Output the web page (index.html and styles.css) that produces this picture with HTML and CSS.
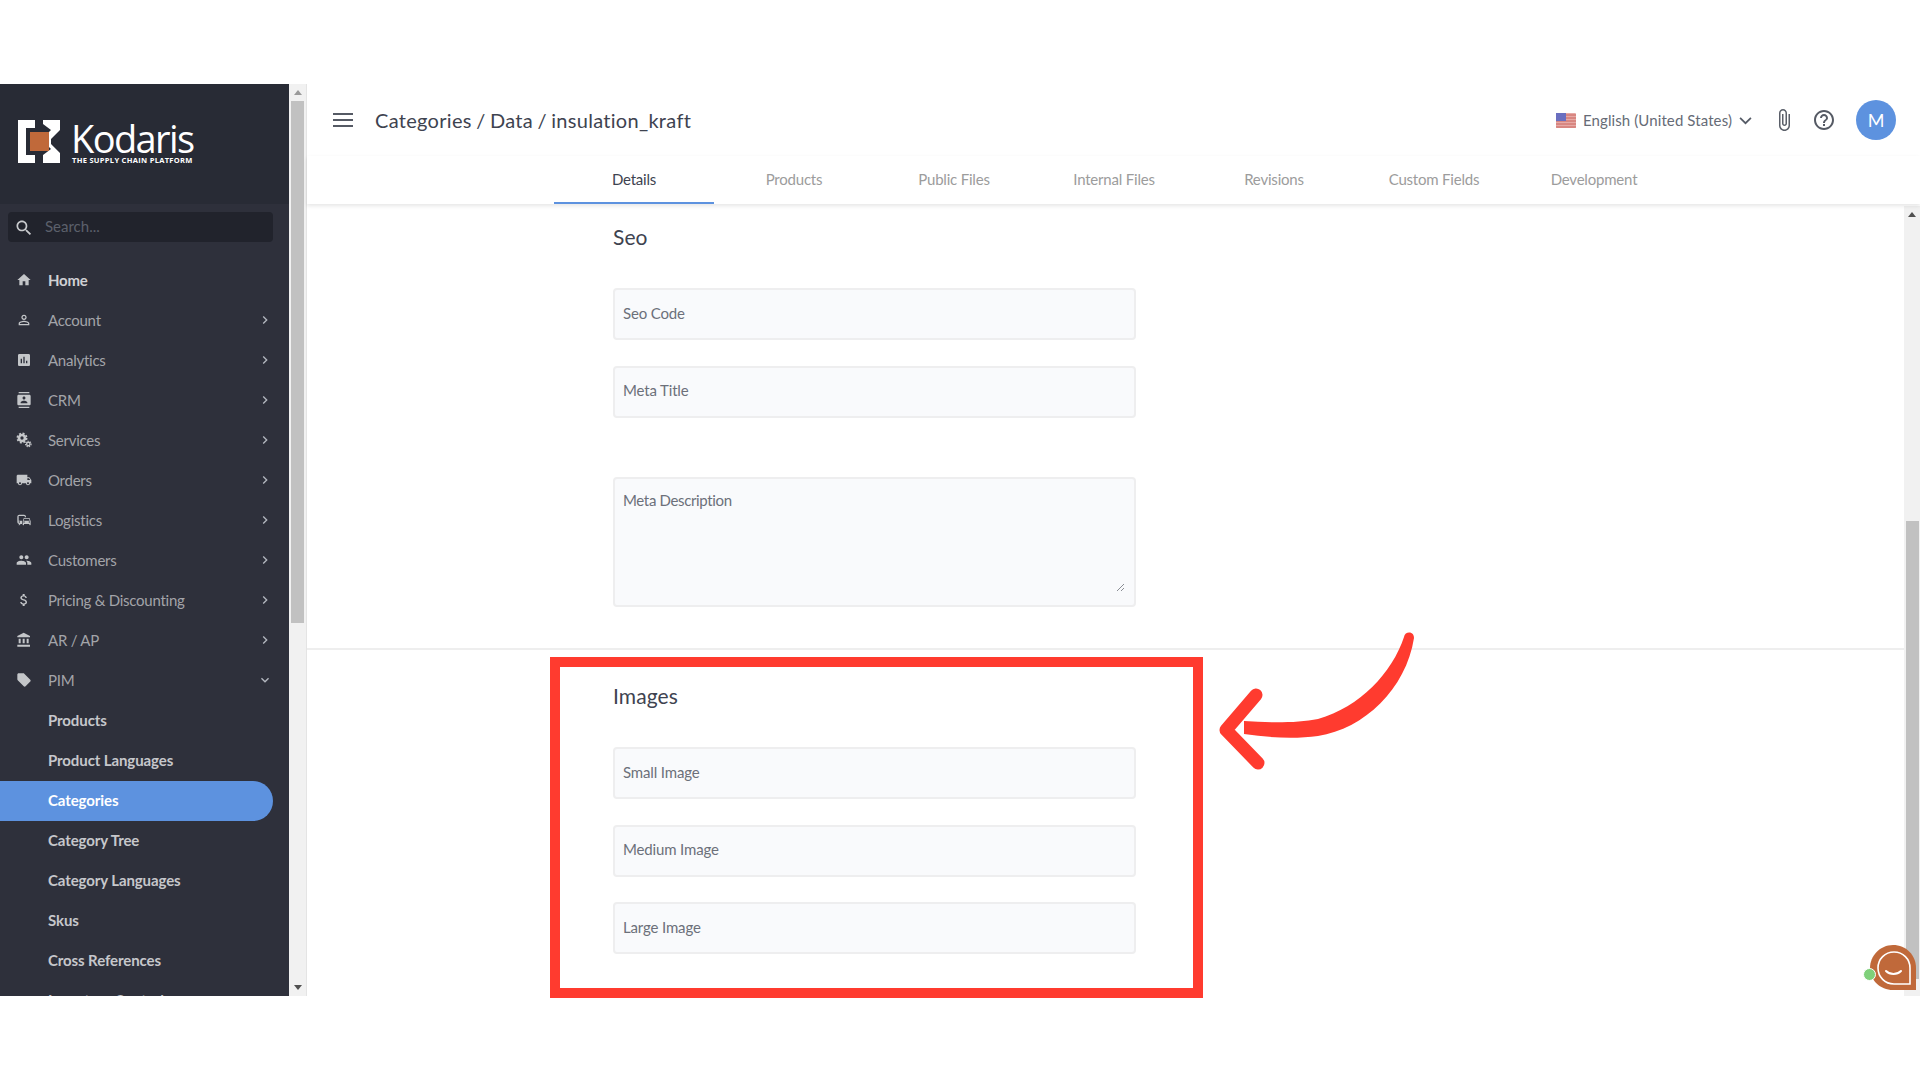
FILE: index.html
```html
<!DOCTYPE html>
<html lang="en">
<head>
  <meta charset="UTF-8">
  <meta name="viewport" content="width=device-width, initial-scale=1.0">
  <title>Categories / Data / insulation_kraft</title>
  <link rel="stylesheet" href="styles.css">
</head>
<body>
  <svg class="sprite" xmlns="http://www.w3.org/2000/svg">
    <symbol id="i-home" viewBox="0 0 24 24"><path d="M10 20v-6h4v6h5v-8h3L12 3 2 12h3v8z"/></symbol>
    <symbol id="i-account" viewBox="0 0 24 24"><path d="M12 5.9c1.16 0 2.1.94 2.1 2.1s-.94 2.1-2.1 2.1S9.9 9.16 9.9 8s.94-2.1 2.1-2.1m0 9c2.97 0 6.1 1.46 6.1 2.1v1.1H5.9V17c0-.64 3.13-2.1 6.1-2.1M12 4C9.79 4 8 5.79 8 8s1.79 4 4 4 4-1.79 4-4-1.79-4-4-4zm0 9c-2.67 0-8 1.34-8 4v3h16v-3c0-2.66-5.33-4-8-4z"/></symbol>
    <symbol id="i-analytics" viewBox="0 0 24 24"><path d="M19 3H5c-1.1 0-2 .9-2 2v14c0 1.1.9 2 2 2h14c1.1 0 2-.9 2-2V5c0-1.1-.9-2-2-2zM9 17H7v-7h2v7zm4 0h-2V7h2v10zm4 0h-2v-4h2v4z"/></symbol>
    <symbol id="i-crm" viewBox="0 0 24 24"><path d="M20 0H4v2h16V0zM4 24h16v-2H4v2zM20 4H4c-1.1 0-2 .9-2 2v12c0 1.1.9 2 2 2h16c1.1 0 2-.9 2-2V6c0-1.1-.9-2-2-2zm-8 2.75c1.24 0 2.25 1.01 2.25 2.25s-1.01 2.25-2.25 2.25S9.75 10.24 9.75 9 10.76 6.75 12 6.75zM17 17H7v-1.5c0-1.67 3.33-2.5 5-2.5s5 .83 5 2.5V17z"/></symbol>
    <symbol id="i-services" viewBox="0 0 24 24"><circle cx="9" cy="9" r="4.5" fill="none" stroke="currentColor" stroke-width="4"/><circle cx="9" cy="9" r="7" fill="none" stroke="currentColor" stroke-width="2.4" stroke-dasharray="3 2.5"/><circle cx="18.5" cy="18" r="2.6" fill="none" stroke="currentColor" stroke-width="2"/><circle cx="18.5" cy="18" r="4.2" fill="none" stroke="currentColor" stroke-width="1.6" stroke-dasharray="2 1.6"/></symbol>
    <symbol id="i-orders" viewBox="0 0 24 24"><path d="M20 8h-3V4H3c-1.1 0-2 .9-2 2v11h2c0 1.66 1.34 3 3 3s3-1.34 3-3h6c0 1.66 1.34 3 3 3s3-1.34 3-3h2v-5l-3-4zM6 18.5c-.83 0-1.5-.67-1.5-1.5s.67-1.5 1.5-1.5 1.5.67 1.5 1.5-.67 1.5-1.5 1.5zm13.5-9l1.96 2.5H17V9.5h2.5zm-1.5 9c-.83 0-1.5-.67-1.5-1.5s.67-1.5 1.5-1.5 1.5.67 1.5 1.5-.67 1.5-1.5 1.5z"/></symbol>
    <symbol id="i-logistics" viewBox="0 0 24 24"><path d="M12 4H5C3.34 4 2 5.34 2 7v8c0 1.66 1.34 3 3 3l-1 1v1h1l2-2.03L9 18v-5H4V5.98L13 6v2h2V7c0-1.66-1.34-3-3-3zM5 14c.55 0 1 .45 1 1s-.45 1-1 1-1-.45-1-1 .45-1 1-1zm15.57-4.34c-.14-.4-.52-.66-.97-.66h-7.19c-.46 0-.83.26-.98.66L10 13.77l.01 5.51c0 .38.31.72.69.72h.62c.38 0 .68-.38.68-.76V18h8v1.24c0 .38.31.76.69.76h.61c.38 0 .69-.34.69-.72l.01-1.37v-4.14l-1.43-4.07zm-8.16.34h7.19l1.03 3h-9.25l1.03-3zM12 16c-.55 0-1-.45-1-1s.45-1 1-1 1 .45 1 1-.45 1-1 1zm8 0c-.55 0-1-.45-1-1s.45-1 1-1 1 .45 1 1-.45 1-1 1z"/></symbol>
    <symbol id="i-customers" viewBox="0 0 24 24"><path d="M16 11c1.66 0 2.99-1.34 2.99-3S17.66 5 16 5c-1.66 0-3 1.34-3 3s1.34 3 3 3zm-8 0c1.66 0 2.99-1.34 2.99-3S9.66 5 8 5C6.34 5 5 6.34 5 8s1.34 3 3 3zm0 2c-2.33 0-7 1.17-7 3.5V19h14v-2.5c0-2.33-4.67-3.5-7-3.5zm8 0c-.29 0-.62.02-.97.05 1.16.84 1.97 1.97 1.97 3.45V19h6v-2.5c0-2.33-4.67-3.5-7-3.5z"/></symbol>
    <symbol id="i-pricing" viewBox="0 0 24 24"><path d="M11.8 10.9c-2.27-.59-3-1.2-3-2.15 0-1.09 1.01-1.85 2.7-1.85 1.78 0 2.44.85 2.5 2.1h2.21c-.07-1.72-1.12-3.3-3.21-3.81V3h-3v2.16c-1.94.42-3.5 1.68-3.5 3.61 0 2.31 1.91 3.46 4.7 4.13 2.5.6 3 1.48 3 2.41 0 .69-.49 1.79-2.7 1.79-2.06 0-2.87-.92-2.98-2.1h-2.2c.12 2.19 1.76 3.42 3.68 3.83V21h3v-2.15c1.95-.37 3.5-1.5 3.5-3.55 0-2.84-2.43-3.81-4.7-4.4z"/></symbol>
    <symbol id="i-bank" viewBox="0 0 24 24"><path d="M4 10v7h3v-7H4zm6 0v7h3v-7h-3zM2 22h19v-3H2v3zm14-12v7h3v-7h-3zm-4.5-9L2 6v2h19V6l-9.5-5z"/></symbol>
    <symbol id="i-tag" viewBox="0 0 24 24"><path d="M21.41 11.58l-9-9C12.05 2.22 11.55 2 11 2H4c-1.1 0-2 .9-2 2v7c0 .55.22 1.05.59 1.42l9 9c.36.36.86.58 1.41.58.55 0 1.05-.22 1.41-.59l7-7c.37-.36.59-.86.59-1.41 0-.55-.23-1.06-.59-1.42z"/></symbol>
    <symbol id="i-right" viewBox="0 0 24 24"><path d="M8.6 16.6L13.2 12 8.6 7.4 10 6l6 6-6 6z"/></symbol>
    <symbol id="i-down" viewBox="0 0 24 24"><path d="M7.4 8.6L12 13.2l4.6-4.6L18 10l-6 6-6-6z"/></symbol>
  </svg>

  <div class="app">
    <aside class="sidebar">
      <div class="sidebar-inner">
        <div class="logo">
          <svg class="logo-mark" viewBox="0 0 42 43">
            <path fill="#fff" d="M0 0h17v8H8v27h9v8H0z"/>
            <path fill="#fff" d="M25 0h17v10l-9 9v5l9 9v10H25v-8l8-6-8-8v-3l8-8-8-6z"/>
            <rect x="12" y="12" width="19" height="19" fill="#c0693a"/>
          </svg>
          <div class="logo-text">
            <span class="logo-name">Kodaris</span>
            <span class="logo-sub">THE SUPPLY CHAIN PLATFORM</span>
          </div>
        </div>

        <div class="search">
          <svg class="search-icon" viewBox="0 0 24 24"><path d="M15.5 14h-.79l-.28-.27C15.41 12.59 16 11.11 16 9.5 16 5.91 13.09 3 9.5 3S3 5.91 3 9.5 5.91 16 9.5 16c1.61 0 3.09-.59 4.23-1.57l.27.28v.79l5 4.99L20.49 19l-4.99-5zm-6 0C7.01 14 5 11.99 5 9.5S7.01 5 9.5 5 14 7.01 14 9.5 11.99 14 9.5 14z"/></svg>
          <span>Search...</span>
        </div>

        <nav class="menu">
          <a class="menu-item home"><svg class="menu-icon"><use href="#i-home"/></svg><span>Home</span></a>
          <a class="menu-item"><svg class="menu-icon"><use href="#i-account"/></svg><span>Account</span><svg class="chev"><use href="#i-right"/></svg></a>
          <a class="menu-item"><svg class="menu-icon"><use href="#i-analytics"/></svg><span>Analytics</span><svg class="chev"><use href="#i-right"/></svg></a>
          <a class="menu-item"><svg class="menu-icon"><use href="#i-crm"/></svg><span>CRM</span><svg class="chev"><use href="#i-right"/></svg></a>
          <a class="menu-item"><svg class="menu-icon"><use href="#i-services"/></svg><span>Services</span><svg class="chev"><use href="#i-right"/></svg></a>
          <a class="menu-item"><svg class="menu-icon"><use href="#i-orders"/></svg><span>Orders</span><svg class="chev"><use href="#i-right"/></svg></a>
          <a class="menu-item"><svg class="menu-icon"><use href="#i-logistics"/></svg><span>Logistics</span><svg class="chev"><use href="#i-right"/></svg></a>
          <a class="menu-item"><svg class="menu-icon"><use href="#i-customers"/></svg><span>Customers</span><svg class="chev"><use href="#i-right"/></svg></a>
          <a class="menu-item"><svg class="menu-icon"><use href="#i-pricing"/></svg><span>Pricing &amp; Discounting</span><svg class="chev"><use href="#i-right"/></svg></a>
          <a class="menu-item"><svg class="menu-icon"><use href="#i-bank"/></svg><span>AR / AP</span><svg class="chev"><use href="#i-right"/></svg></a>
          <a class="menu-item"><svg class="menu-icon"><use href="#i-tag"/></svg><span>PIM</span><svg class="chev"><use href="#i-down"/></svg></a>
          <a class="menu-item sub">Products</a>
          <a class="menu-item sub">Product Languages</a>
          <a class="menu-item sub active">Categories</a>
          <a class="menu-item sub">Category Tree</a>
          <a class="menu-item sub">Category Languages</a>
          <a class="menu-item sub">Skus</a>
          <a class="menu-item sub">Cross References</a>
          <a class="menu-item sub">Inventory Control</a>
        </nav>
      </div>
      <div class="scrollbar side-scroll">
        <i class="arrow up"></i>
        <div class="track"><div class="thumb"></div></div>
        <i class="arrow down"></i>
      </div>
    </aside>

    <main class="main">
      <header class="topbar">
        <div class="hamburger"><b></b><b></b><b></b></div>
        <h1 class="crumbs">Categories / Data / insulation_kraft</h1>
        <div class="top-actions">
          <svg class="flag" viewBox="0 0 20 15">
            <rect width="20" height="15" rx="1" fill="#e7a9a5"/>
            <path d="M0 2h20M0 5h20M0 8h20M0 11h20M0 14h20" stroke="#c9645f" stroke-width="1"/>
            <rect width="10" height="8" fill="#6a6fc0"/>
          </svg>
          <span class="lang">English (United States)</span>
          <svg class="lang-chev" viewBox="0 0 12 8"><path d="M1 1.5l5 5 5-5" fill="none" stroke="#555b66" stroke-width="1.6"/></svg>
          <svg class="clip" viewBox="0 0 24 24"><path d="M16.5 6v11.5c0 2.21-1.79 4-4 4s-4-1.79-4-4V5c0-1.38 1.12-2.5 2.5-2.5s2.5 1.12 2.5 2.5v10.5c0 .55-.45 1-1 1s-1-.45-1-1V6H10v9.5c0 1.38 1.12 2.5 2.5 2.5s2.5-1.12 2.5-2.5V5c0-2.21-1.79-4-4-4S7 2.79 7 5v12.5c0 3.04 2.46 5.5 5.5 5.5s5.5-2.46 5.5-5.5V6h-1.5z"/></svg>
          <svg class="help" viewBox="0 0 24 24"><path d="M11 18h2v-2h-2v2zm1-16C6.48 2 2 6.48 2 12s4.48 10 10 10 10-4.48 10-10S17.52 2 12 2zm0 18c-4.41 0-8-3.59-8-8s3.59-8 8-8 8 3.59 8 8-3.59 8-8 8zm0-14c-2.21 0-4 1.79-4 4h2c0-1.1.9-2 2-2s2 .9 2 2c0 2-3 1.75-3 5h2c0-2.25 3-2.5 3-5 0-2.21-1.79-4-4-4z"/></svg>
          <div class="avatar">M</div>
        </div>
      </header>

      <div class="tabs">
        <a class="tab active">Details</a>
        <a class="tab">Products</a>
        <a class="tab">Public Files</a>
        <a class="tab">Internal Files</a>
        <a class="tab">Revisions</a>
        <a class="tab">Custom Fields</a>
        <a class="tab">Development</a>
      </div>

      <div class="body-wrap">
        <div class="content">
          <section class="section seo">
            <h2>Seo</h2>
            <input class="field" placeholder="Seo Code">
            <input class="field" placeholder="Meta Title">
            <div class="area-wrap">
              <textarea class="field area" placeholder="Meta Description"></textarea>
              <svg class="grip" viewBox="0 0 9 9"><path d="M1 8l7-7M5 8l3-3" stroke="#8a8d94" stroke-width="1" fill="none"/></svg>
            </div>
          </section>
          <section class="section images">
            <h2>Images</h2>
            <input class="field" placeholder="Small Image">
            <input class="field" placeholder="Medium Image">
            <input class="field" placeholder="Large Image">
          </section>
        </div>
        <div class="scrollbar main-scroll">
          <i class="arrow up"></i>
          <div class="track"><div class="thumb"></div></div>
        </div>
      </div>
    </main>
  </div>

  <!-- annotation drawn over the screenshot -->
  <div class="red-box"></div>
  <svg class="red-arrow" viewBox="0 0 204 150">
    <path fill="#ff3b2f" d="M190 8c1-6 10-6 10 1C192 60 150 100 104 107 82 110 56 109 30 105L30 92C56 94 84 94 104 90 146 78 178 44 190 8z"/>
    <path d="M42 66L12 101l32 33" fill="none" stroke="#ff3b2f" stroke-width="13" stroke-linecap="round" stroke-linejoin="round"/>
  </svg>

  <div class="chat">
    <svg class="chat-bubble" viewBox="0 0 46 46">
      <path fill="#c0693a" d="M23 0c13 0 23 10 23 23v22H23C10 45 0 35 0 23S10 0 23 0z"/>
      <path fill="none" stroke="#fff" stroke-width="1.6" d="M24 7c9 0 16 7 16 16v16H24c-9 0-16-7-16-16S15 7 24 7z"/>
      <path fill="none" stroke="#fff" stroke-width="2" stroke-linecap="round" d="M16 26c4 4 11 4 15 0"/>
    </svg>
    <i class="chat-dot"></i>
  </div>
</body>
</html>
```

FILE: styles.css
```css
* {
  box-sizing: border-box;
}
html, body {
  margin: 0;
  padding: 0;
  height: 1080px;
  overflow: hidden;
  background: #fff;
}
body {
  font-family: 'Lato', 'Open Sans', sans-serif;
  color: #3e4350;
  padding-top: 84px;
  position: relative;
}
.sprite {
  display: none;
}
.app {
  display: flex;
  height: 912px;
}

/* sidebar */
.sidebar {
  display: flex;
  width: 307px;
  flex: none;
  height: 100%;
}
.sidebar-inner {
  width: 289px;
  background: #2e303b;
  overflow: hidden;
}
.logo {
  height: 120px;
  background: #282b35;
  padding: 36px 0 0 18px;
  display: flex;
  gap: 11px;
}
.logo-mark {
  width: 42px;
  height: 43px;
}
.logo-text {
  display: flex;
  flex-direction: column;
  color: #fff;
}
.logo-name {
  font-family: 'Open Sans', sans-serif;
  font-size: 38px;
  line-height: 36px;
  letter-spacing: -1.6px;
}
.logo-sub {
  font-family: 'Open Sans', sans-serif;
  font-size: 7.5px;
  line-height: 9px;
  font-weight: 700;
  letter-spacing: .3px;
  white-space: nowrap;
  margin-left: 1px;
}
.search {
  display: flex;
  align-items: center;
  height: 30px;
  margin: 8px 16px 0 8px;
  padding-left: 6px;
  gap: 11px;
  background: #21232c;
  border-radius: 4px;
  color: #5c606b;
  font-size: 15px;
}
.search span {
  margin-top: -2px;
}
.search-icon {
  width: 20px;
  height: 20px;
  fill: #c8cacd;
  margin-top: 2px;
}
.menu {
  margin-top: 19px;
}
.menu-item {
  display: flex;
  align-items: center;
  height: 40px;
  padding-left: 16px;
  padding-bottom: 2px;
  font-size: 15px;
  letter-spacing: -.25px;
  color: #a3a4a9;
  white-space: nowrap;
}
.menu-icon {
  width: 16px;
  height: 16px;
  fill: #c4c6c9;
  color: #c4c6c9;
  margin-right: 16px;
  flex: none;
}
.chev {
  width: 16px;
  height: 16px;
  fill: #b4b8c0;
  margin-left: auto;
  margin-right: 16px;
}
.menu-item.home {
  color: #d0d1d4;
  font-weight: 700;
}
.menu-item.sub {
  padding-left: 48px;
  color: #c6c7cb;
  font-weight: 700;
  letter-spacing: -.1px;
}
.menu-item.active {
  width: 273px;
  background: #5d92df;
  color: #fff;
  border-radius: 0 20px 20px 0;
}

/* fake scrollbars, the page itself does not scroll */
.scrollbar {
  display: flex;
  flex-direction: column;
  align-items: center;
  background: #f1f1f1;
  flex: none;
}
.side-scroll {
  width: 18px;
  border-right: 1px solid #e4e4e4;
}
.main-scroll {
  width: 16px;
}
.track {
  flex: 1;
  width: 100%;
}
.thumb {
  background: #c1c1c1;
}
.side-scroll .thumb {
  width: 13px;
  height: 522px;
  margin: 0 auto;
}
.main-scroll .thumb {
  width: 13px;
  height: 458px;
  margin: 298px auto 0;
}
.arrow {
  width: 0;
  height: 0;
  border-left: 4px solid transparent;
  border-right: 4px solid transparent;
  margin: 6px 0;
}
.arrow.up {
  border-bottom: 5px solid #9a9a9a;
}
.arrow.down {
  border-top: 5px solid #505050;
}
.main-scroll .arrow.up {
  border-bottom-color: #505050;
}

/* main column */
.main {
  flex: 1;
  display: flex;
  flex-direction: column;
  min-width: 0;
}
.topbar {
  display: flex;
  align-items: center;
  height: 72px;
  padding: 0 24px 0 26px;
}
.hamburger {
  width: 20px;
  display: flex;
  flex-direction: column;
  gap: 4px;
  margin-right: 22px;
}
.hamburger b {
  display: block;
  height: 2px;
  background: #555a64;
}
.crumbs {
  margin: 0;
  font-size: 20px;
  font-weight: 400;
  letter-spacing: .3px;
  word-spacing: -1px;
  color: #3e4350;
}
.top-actions {
  margin-left: auto;
  display: flex;
  align-items: center;
}
.flag {
  width: 20px;
  height: 15px;
  margin-right: 7px;
}
.lang {
  font-size: 15px;
  letter-spacing: .1px;
  color: #666b76;
  white-space: nowrap;
}
.lang-chev {
  width: 13px;
  height: 9px;
  margin-left: 7px;
  margin-right: 20px;
}
.clip {
  width: 24px;
  height: 24px;
  fill: #5a5f69;
  margin-right: 16px;
}
.help {
  width: 24px;
  height: 24px;
  fill: #555a64;
  margin-right: 20px;
}
.avatar {
  width: 40px;
  height: 40px;
  border-radius: 50%;
  background: #5d92df;
  color: #fff;
  font-size: 18px;
  display: flex;
  align-items: center;
  justify-content: center;
}
.tabs {
  display: flex;
  height: 48px;
  padding-left: 247px;
  box-shadow: 0 2px 4px rgba(0, 0, 0, .1);
  position: relative;
}
.tab {
  width: 160px;
  padding-top: 14px;
  text-align: center;
  font-size: 15px;
  letter-spacing: -.2px;
  color: #9c9c9c;
}
.tab.active {
  color: #3e4350;
  border-bottom: 2px solid #5d92df;
}
.body-wrap {
  flex: 1;
  display: flex;
  min-height: 0;
  padding-top: 2px;
}
.content {
  flex: 1;
  min-width: 0;
  overflow: hidden;
}
.section {
  padding-left: 306px;
  display: flex;
  flex-direction: column;
  align-items: flex-start;
}
.section h2 {
  margin: 0 0 39px;
  font-size: 21px;
  line-height: 24px;
  font-weight: 400;
  letter-spacing: .1px;
  color: #3e4350;
}
.seo {
  padding-top: 19px;
  padding-bottom: 41px;
  border-bottom: 2px solid #eeeeee;
}
.images {
  padding-top: 34px;
}
.field {
  display: block;
  width: 523px;
  height: 52px;
  margin-bottom: 25.5px;
  padding: 0 8px 3px;
  border: 2px solid #eeeeef;
  border-radius: 4px;
  background: #f9fafc;
  font-family: inherit;
  font-size: 15px;
  letter-spacing: -.15px;
  color: #3e4350;
  outline: none;
}
.field::placeholder {
  color: #6c707a;
  opacity: 1;
}
.area-wrap {
  position: relative;
  margin-top: 34px;
}
.area {
  height: 130px;
  margin: 0;
  padding: 12px 8px;
  letter-spacing: -.35px;
  resize: none;
}
.grip {
  position: absolute;
  right: 11px;
  bottom: 15px;
  width: 9px;
  height: 9px;
}

/* annotation */
.red-box {
  position: absolute;
  left: 550px;
  top: 657px;
  width: 653px;
  height: 341px;
  border: 10px solid #ff3b2f;
}
.red-arrow {
  position: absolute;
  left: 1214px;
  top: 629px;
  width: 204px;
  height: 150px;
}

/* chat widget */
.chat {
  position: absolute;
  left: 1862px;
  top: 945px;
  width: 54px;
  height: 46px;
}
.chat-bubble {
  position: absolute;
  right: 0;
  top: 0;
  width: 46px;
  height: 46px;
}
.chat-dot {
  position: absolute;
  left: 1px;
  top: 23px;
  width: 13px;
  height: 13px;
  border-radius: 50%;
  background: #7fd07a;
  border: 1.5px solid #fff;
}
```
